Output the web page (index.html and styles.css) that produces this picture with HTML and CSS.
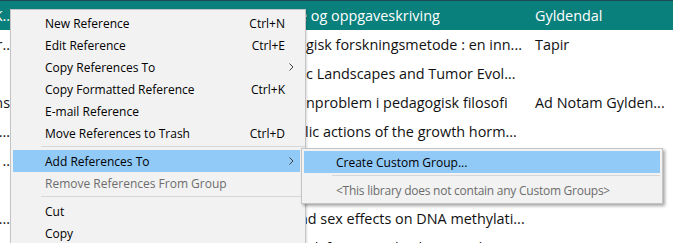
FILE: index.html
```html
<!DOCTYPE html>
<html>
<head>
<meta charset="utf-8">
<link rel="stylesheet" href="styles.css">
</head>
<body>
<div class="table">
  <div class="topline"></div>
  <div class="row hdr">
    <div class="c1"><span>K..</span></div>
    <div class="c2 early">e og oppgaveskriving</div>
    <div class="c3">Gyldendal</div>
  </div>
  <div class="row">
    <div class="c1"><span>r..</span></div>
    <div class="c2">gisk forskningsmetode : en inn...</div>
    <div class="c3">Tapir</div>
  </div>
  <div class="row">
    <div class="c1"><span></span></div>
    <div class="c2">c Landscapes and Tumor Evol...</div>
    <div class="c3"></div>
  </div>
  <div class="row">
    <div class="c1"><span>ns</span></div>
    <div class="c2">nproblem i pedagogisk filosofi</div>
    <div class="c3">Ad Notam Gylden...</div>
  </div>
  <div class="row">
    <div class="c1"><span>...</span></div>
    <div class="c2 lic">lic actions of the growth horm...</div>
    <div class="c3"></div>
  </div>
  <div class="row">
    <div class="c1"><span><b class="blue">.</b> ..</span></div>
    <div class="c2">Genetic effects on cortisol</div>
    <div class="c3"></div>
  </div>
  <div class="row">
    <div class="c1"><span></span></div>
    <div class="c2">Insulin and growth factors</div>
    <div class="c3"></div>
  </div>
  <div class="row">
    <div class="c1"><span>...</span></div>
    <div class="c2 early">nd sex effects on DNA methylati...</div>
    <div class="c3"></div>
  </div>
  <div class="row">
    <div class="c1"><span></span></div>
    <div class="c2">nk for example Ebstein's disease</div>
    <div class="c3"></div>
  </div>
</div>

<div class="menu main">
  <div class="item"><span class="label">New Reference</span><span class="key">Ctrl+N</span></div>
  <div class="item"><span class="label">Edit Reference</span><span class="key">Ctrl+E</span></div>
  <div class="item sub"><span class="label">Copy References To</span>
    <svg class="chev" width="5" height="8" viewBox="0 0 5 8"><polyline points="0.5,0.5 4,4 0.5,7.5" fill="none" stroke="#404040" stroke-width="1"/></svg></div>
  <div class="item"><span class="label">Copy Formatted Reference</span><span class="key">Ctrl+K</span></div>
  <div class="item"><span class="label">E-mail Reference</span></div>
  <div class="item"><span class="label">Move References to Trash</span><span class="key">Ctrl+D</span></div>
  <div class="sep"></div>
  <div class="item sub active"><span class="label">Add References To</span>
    <svg class="chev" width="5" height="8" viewBox="0 0 5 8"><polyline points="0.5,0.5 4,4 0.5,7.5" fill="none" stroke="#404040" stroke-width="1"/></svg></div>
  <div class="item disabled"><span class="label">Remove References From Group</span></div>
  <div class="sep"></div>
  <div class="item"><span class="label">Cut</span></div>
  <div class="item"><span class="label">Copy</span></div>
  <div class="item"><span class="label">Paste</span></div>
</div>

<div class="menu submenu">
  <div class="item active"><span class="label">Create Custom Group...</span></div>
  <div class="sep"></div>
  <div class="item disabled"><span class="label">&lt;This library does not contain any Custom Groups&gt;</span></div>
</div>
</body>
</html>
```

FILE: styles.css
```css
html, body {
  margin: 0;
  padding: 0;
}
body {
  width: 673px;
  height: 243px;
  overflow: hidden;
  position: relative;
  background: #ffffff;
  font-family: "Open Sans", "Noto Sans", sans-serif;
}
.table {
  display: flex;
  flex-direction: column;
}
.topline {
  height: 1px;
  background: #1f4a52;
}
.row {
  display: flex;
  height: 29px;
  align-items: center;
  font-size: 14.4px;
  color: #111111;
  white-space: nowrap;
}
.row.hdr {
  height: 29px;
  background: #0a807c;
  color: #ffffff;
}
.c1 {
  width: 10px;
  overflow: hidden;
  display: flex;
  justify-content: flex-end;
  flex: none;
}
.c1 span {
  flex: none;
}
.blue {
  color: #2a9de0;
  font-weight: normal;
}
.c2 {
  width: 520px;
  flex: none;
  overflow: hidden;
  padding-left: 296px;
  box-sizing: border-box;
}
.c2.early {
  padding-left: 289px;
}
.c2.lic {
  padding-left: 295px;
}
.c3 {
  padding-left: 5px;
  overflow: hidden;
  flex: 1;
}

.menu {
  position: absolute;
  background: #f2f2f2;
  border: 1px solid #c4c4c4;
  padding: 2px 5px 2px 2px;
  box-sizing: border-box;
  font-family: "Open Sans", "Noto Sans", sans-serif;
  font-size: 12px;
  color: #000000;
  display: flex;
  flex-direction: column;
}
.menu.main {
  left: 10px;
  top: 9px;
  width: 296px;
  box-shadow: 1px 1px 2px rgba(0, 0, 0, 0.15);
}
.menu.submenu {
  left: 301px;
  top: 148px;
  width: 362px;
  padding-right: 2px;
  box-shadow: 2px 2px 3px rgba(0, 0, 0, 0.35);
}
.submenu .item.disabled {
  letter-spacing: -0.25px;
}
.item {
  position: relative;
  display: flex;
  align-items: center;
  height: 22px;
  padding-left: 32px;
  padding-right: 15px;
  white-space: nowrap;
}
.item .label {
  flex: 1;
}
.item .key {
  flex: none;
}
.item.active {
  background: #91c9f7;
}
.item.disabled {
  color: #6d6d6d;
}
.chev {
  position: absolute;
  right: 6px;
  top: 7px;
}
.sep {
  height: 6px;
  margin-left: 28px;
  position: relative;
}
.sep::after {
  content: "";
  position: absolute;
  left: 0;
  right: -5px;
  top: 2px;
  height: 1px;
  background: #d7d7d7;
}
.submenu .sep::after {
  right: 0;
}
```
